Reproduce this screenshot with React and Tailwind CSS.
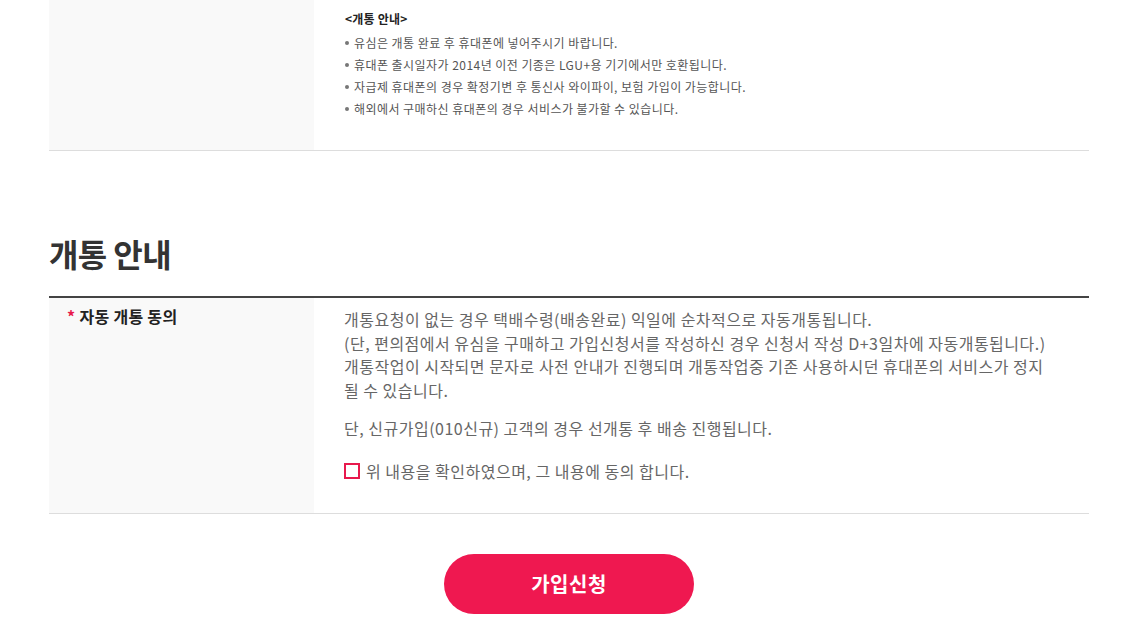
const FONT = "font-['Malgun_Gothic','Noto_Sans_CJK_KR','Noto_Sans',sans-serif]";

const notices = [
  "유심은 개통 완료 후 휴대폰에 넣어주시기 바랍니다.",
  "휴대폰 출시일자가 2014년 이전 기종은 LGU+용 기기에서만 호환됩니다.",
  "자급제 휴대폰의 경우 확정기변 후 통신사 와이파이, 보험 가입이 가능합니다.",
  "해외에서 구매하신 휴대폰의 경우 서비스가 불가할 수 있습니다.",
];

function NoticeRow() {
  return (
    <div className="flex border-b border-[#dddddd]">
      <div className="w-[265px] shrink-0 bg-[#f9f9f9]" />
      <div className="pl-[31px] pt-[8px] pb-[30px]">
        <p className="text-[12px] leading-[22px] font-bold text-[#222] tracking-[0.2px]">&lt;개통 안내&gt;</p>
        <ul className="mt-[2px]">
          {notices.map((n) => (
            <li key={n} className="flex items-center text-[12px] leading-[22px] text-[#555] tracking-[0.45px]">
              <span className="w-[4px] h-[4px] rounded-full bg-[#777] mr-[5px] shrink-0" />
              {n}
            </li>
          ))}
        </ul>
      </div>
    </div>
  );
}

function ActivationRow() {
  return (
    <div className="flex border-t-2 border-[#444] border-b border-b-[#dddddd]">
      <div className="w-[265px] shrink-0 bg-[#f9f9f9] pl-[18px] pt-[6px]">
        <p className="text-[16px] leading-[24px] font-bold text-[#222] tracking-[0.3px]">
          <span className="text-[#e8194d] mr-[4px]">*</span>자동 개통 동의
        </p>
      </div>
      <div className="pl-[30px] pt-[10px] pb-[30px] text-[16px] text-[#666] tracking-[0.5px]">
        <p className="leading-[23.5px] w-[740px]">
          개통요청이 없는 경우 택배수령(배송완료) 익일에 순차적으로 자동개통됩니다.
          <br />
          (단, 편의점에서 유심을 구매하고 가입신청서를 작성하신 경우 신청서 작성 D+3일차에 자동개통됩니다.)
          <br />
          개통작업이 시작되면 문자로 사전 안내가 진행되며 개통작업중 기존 사용하시던 휴대폰의 서비스가 정지
          <br />될 수 있습니다.
        </p>
        <p className="leading-[24px] mt-[14px]">단, 신규가입(010신규) 고객의 경우 선개통 후 배송 진행됩니다.</p>
        <label className="flex items-center mt-[19px] h-[24px] cursor-pointer">
          <span className="w-[16px] h-[16px] border-2 border-[#e8194d] bg-white shrink-0 mr-[6px]" />
          위 내용을 확인하였으며, 그 내용에 동의 합니다.
        </label>
      </div>
    </div>
  );
}

export default function App() {
  return (
    <div className={`bg-white min-h-[642px] ${FONT}`}>
      <div className="w-[1040px] ml-[49px] pb-[40px]">
        <NoticeRow />
        <h2 className="mt-[82px] mb-[23px] text-[32px] leading-[40px] font-bold text-[#333] tracking-[-0.6px]">개통 안내</h2>
        <ActivationRow />
        <div className="flex justify-center mt-[40px]">
          <button
            type="button"
            className="w-[250px] h-[60px] rounded-full bg-[#ef1850] text-white text-[20px] font-bold tracking-[0.5px]"
          >
            가입신청
          </button>
        </div>
      </div>
    </div>
  );
}
